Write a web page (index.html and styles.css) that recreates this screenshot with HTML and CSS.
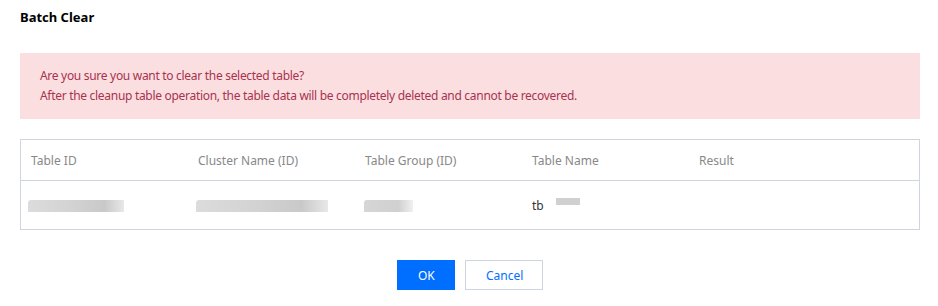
FILE: index.html
```html
<!DOCTYPE html>
<html lang="en">
<head>
    <meta charset="UTF-8">
    <title>Batch Clear</title>
    <link rel="stylesheet" href="styles.css">
</head>
<body>
    <div class="dialog">
        <h2 class="dialog-title">Batch Clear</h2>
        <div class="alert">
            <p>Are you sure you want to clear the selected table?</p>
            <p>After the cleanup table operation, the table data will be completely deleted and cannot be recovered.</p>
        </div>
        <table class="grid">
            <thead>
                <tr>
                    <th>Table ID</th>
                    <th>Cluster Name (ID)</th>
                    <th>Table Group (ID)</th>
                    <th>Table Name</th>
                    <th class="col-result">Result</th>
                </tr>
            </thead>
            <tbody>
                <tr>
                    <td><span class="masked mask-id"></span></td>
                    <td><span class="masked mask-cluster"></span></td>
                    <td><span class="masked mask-group"></span></td>
                    <td class="name-cell">tb<span class="masked mask-name"></span></td>
                    <td></td>
                </tr>
            </tbody>
        </table>
        <div class="footer">
            <button class="btn btn-primary">OK</button>
            <button class="btn btn-weak">Cancel</button>
        </div>
    </div>
</body>
</html>
```

FILE: styles.css
```css
body {
    margin: 0;
    background: #fff;
    font-family: 'Noto Sans', 'Open Sans', sans-serif;
    font-size: 12px;
    color: #000;
}
.dialog {
    padding: 0 18px 0 20px;
}
.dialog-title {
    margin: 0;
    padding-top: 8px;
    font-size: 13px;
    line-height: 18px;
    font-weight: 700;
    color: #000;
}
.alert {
    margin-top: 27px;
    background: #fbdfe0;
    padding: 13px 20px;
    color: #a8324f;
    letter-spacing: -0.3px;
}
.alert p {
    margin: 0;
    line-height: 20px;
}
.grid {
    width: 100%;
    margin-top: 20px;
    border-collapse: collapse;
    border: 1px solid #cfd5de;
    table-layout: fixed;
}
.grid th {
    height: 39px;
    padding: 1px 10px 0;
    text-align: left;
    font-weight: 400;
    color: #888;
    border-bottom: 1px solid #cfd5de;
    width: 147px;
}
.grid th.col-result {
    width: auto;
}
.grid td {
    height: 48px;
    padding: 0 10px;
    color: #333;
}
.masked {
    display: inline-block;
    height: 12px;
    vertical-align: middle;
    background: linear-gradient(to right, #dcdcdc, #d4d4d4 40%, #c9c9c9 80%, #e8e8e8);
    border-radius: 3px 0 0 0;
}
.mask-id {
    width: 96px;
    margin-left: -3px;
}
.mask-cluster {
    width: 132px;
    margin-left: -2px;
}
.mask-group {
    width: 49px;
    margin-left: -1px;
    background: linear-gradient(to right, #d6d6d6, #d0d0d0 70%, #f0f0f0);
}
.name-cell {
    vertical-align: middle;
}
.mask-name {
    width: 24px;
    height: 7px;
    margin-left: 12px;
    vertical-align: 5px;
    background: #d0d0d0;
    border-radius: 0;
}
.footer {
    display: flex;
    justify-content: center;
    gap: 10px;
    padding: 30px 0 0 0;
}
.btn {
    height: 30px;
    padding: 0 20px;
    font-family: inherit;
    font-size: 12px;
    border-radius: 0;
    cursor: pointer;
}
.btn-primary {
    width: 58px;
    background: #006eff;
    border: 1px solid #006eff;
    color: #fff;
}
.btn-weak {
    width: 78px;
    background: #fff;
    border: 1px solid #cfd5de;
    color: #006eff;
}
```
